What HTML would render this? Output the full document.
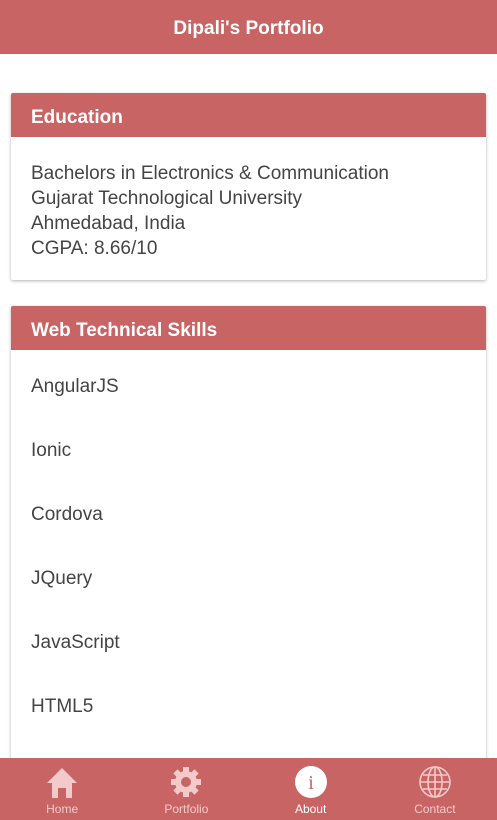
<!DOCTYPE html>
<html><head><style>
body{margin:0;width:497px;height:820px;overflow:hidden;background:#fff;font-family:"Liberation Sans",sans-serif;position:relative}
.hdr{position:absolute;top:0;left:0;width:497px;height:54px;background:#c86464;color:#fff;font-weight:bold;font-size:19px;text-align:center;line-height:58px}
.card{position:absolute;left:11px;width:475px;background:#fff;border-radius:2px;box-shadow:0 1px 3px rgba(0,0,0,.3)}
.ch{background:#c86464;color:#fff;font-weight:bold;font-size:19px;height:44px;line-height:50px;padding-left:20px;border-radius:2px 2px 0 0}
.cb{padding:24px 20px 20px;color:#444;font-size:19px;line-height:25px}
.item{height:64px;line-height:64px;padding-left:20px;color:#444;font-size:19px}
.tabs{position:absolute;top:758px;left:0;width:497px;height:62px;background:#c86464;display:flex}
.tab{flex:1;text-align:center;color:#f2caca;font-size:12px;position:relative}
.tab svg{position:absolute;top:8px;left:50%;margin-left:-16px}
.tab span{position:absolute;top:44px;left:0;right:0}
</style></head><body>
<div class="hdr">Dipali's Portfolio</div>
<div class="card" style="top:93px;height:187px">
<div class="ch">Education</div>
<div class="cb">Bachelors in Electronics &amp; Communication<br>Gujarat Technological University<br>Ahmedabad, India<br>CGPA: 8.66/10</div>
</div>
<div class="card" style="top:306px;height:470px">
<div class="ch">Web Technical Skills</div>
<div style="padding-top:5px">
<div class="item">AngularJS</div><div class="item">Ionic</div><div class="item">Cordova</div><div class="item">JQuery</div><div class="item">JavaScript</div><div class="item">HTML5</div>
</div></div>
<div class="tabs">
<div class="tab"><svg width="32" height="32" viewBox="0 0 32 32"><path d="M16 2 L31 17 H26 V32 H20 V22 H12 V32 H6 V17 H1 Z" fill="#f2caca"/></svg><span>Home</span></div>
<div class="tab"><svg width="32" height="32" viewBox="0 0 32 32"><g fill="#f2caca"><circle cx="16" cy="16" r="11"/><rect x="13" y="1" width="6" height="30"/><rect x="1" y="13" width="30" height="6"/><rect x="13" y="1" width="6" height="30" transform="rotate(45 16 16)"/><rect x="13" y="1" width="6" height="30" transform="rotate(-45 16 16)"/></g><circle cx="16" cy="16" r="5" fill="#c86464"/></svg><span>Portfolio</span></div>
<div class="tab" style="color:#fff"><svg width="32" height="32" viewBox="0 0 32 32"><circle cx="16" cy="16" r="16" fill="#fff"/><text x="16" y="23" text-anchor="middle" font-family="Liberation Serif" font-size="20" fill="#c86464">i</text></svg><span>About</span></div>
<div class="tab"><svg width="32" height="32" viewBox="0 0 32 32" fill="none" stroke="#f2caca" stroke-width="1.6"><circle cx="16" cy="16" r="15"/><ellipse cx="16" cy="16" rx="7" ry="15"/><line x1="16" y1="1" x2="16" y2="31"/><line x1="1" y1="16" x2="31" y2="16"/><line x1="4" y1="9" x2="28" y2="9"/><line x1="4" y1="23" x2="28" y2="23"/></svg><span>Contact</span></div>
</div>
</body></html>
